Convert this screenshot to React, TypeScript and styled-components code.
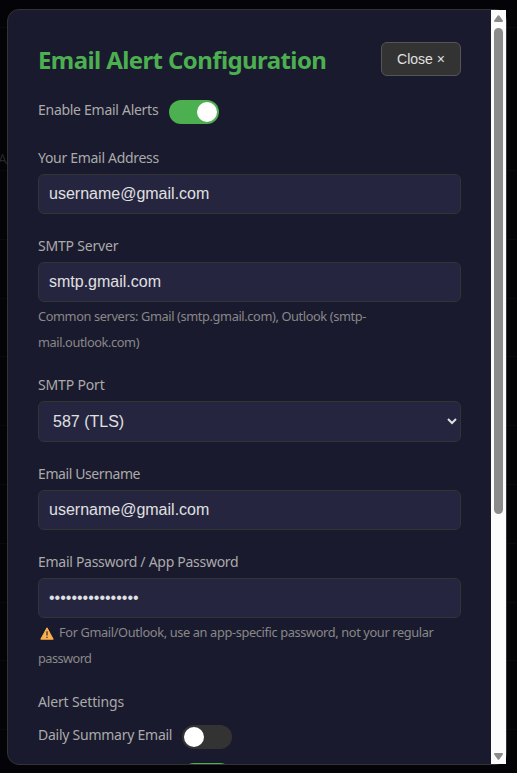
import React from "react";
import styled, { createGlobalStyle } from "styled-components";

const GlobalStyle = createGlobalStyle`
  *, *::before, *::after { box-sizing: border-box; }
  html, body { margin: 0; height: 100%; background: #030308; overflow: hidden; }
  #root { height: 100%; }
`;

const ui = `"Segoe UI", "Noto Sans", "Open Sans", sans-serif`;
const control = `Arial, "Liberation Sans", sans-serif`;

const Page = styled.div`
  position: relative;
  width: 517px;
  height: 773px;
  overflow: hidden;
  background: #030308;
  font-family: ${ui};
`;

const Backdrop = styled.div`
  position: absolute;
  inset: 0;
  display: flex;
  flex-direction: column;
`;

const BackdropRow = styled.div<{ $height: number }>`
  flex: none;
  height: ${(p) => p.$height}px;
  border-bottom: 1px solid #0a0a0d;
  display: flex;
  align-items: flex-end;
  color: #25252a;
  font-size: 14px;
  line-height: 22px;
`;

const BackdropText = styled.span`
  margin-left: -2px;
`;

const Dialog = styled.div`
  position: relative;
  display: flex;
  width: 500px;
  height: 756px;
  margin: 9px 0 0 7px;
  border: 1px solid #333;
  border-radius: 12px;
  background: #1a1a2e;
`;

const Content = styled.div`
  flex: 1;
  min-width: 0;
  padding: 30px 30px 0;
  overflow: hidden;
`;

const Scrollbar = styled.div`
  flex: none;
  display: flex;
  flex-direction: column;
  align-items: center;
  width: 15px;
  background: #fcfcfc;
`;

const ArrowIcon = styled.svg<{ $down?: boolean }>`
  flex: none;
  width: 15px;
  height: ${(p) => (p.$down ? 16 : 18)}px;
  fill: #8b8b8b;
`;

const Thumb = styled.div`
  width: 9px;
  height: 486px;
  border-radius: 5px;
  background: #8b8b8b;
`;

const Track = styled.div`
  flex: 1;
`;

const Header = styled.header`
  display: flex;
  justify-content: space-between;
  align-items: center;
  height: 38px;
  margin-bottom: 22px;
`;

const Title = styled.h2`
  margin: 0;
  padding-top: 2px;
  color: #4caf50;
  font-size: 24px;
  font-weight: 700;
  line-height: 38px;
  white-space: nowrap;
  letter-spacing: -0.6px;
`;

const CloseButton = styled.button`
  width: 80px;
  height: 34px;
  padding: 0;
  border: 1px solid #555;
  border-radius: 6px;
  background: #333;
  color: #e0e0e0;
  font: 14px ${control};
`;

const Label = styled.label<{ $track?: number }>`
  display: block;
  height: 24px;
  color: #aaa;
  font-size: 14px;
  line-height: 24px;
  white-space: nowrap;
  letter-spacing: ${(p) => p.$track ?? -0.28}px;
`;

const ToggleRow = styled.div<{ $labelWidth: number; $gap: number }>`
  display: grid;
  grid-template-columns: ${(p) => p.$labelWidth}px 50px;
  height: 24px;
  margin-bottom: ${(p) => p.$gap}px;

  ${Label} {
    margin-top: -2px;
  }
`;

const Toggle = styled.span<{ $on?: boolean }>`
  display: flex;
  justify-content: ${(p) => (p.$on ? "flex-end" : "flex-start")};
  width: 50px;
  height: 24px;
  padding: 2px;
  border-radius: 12px;
  background: ${(p) => (p.$on ? "#4caf50" : "#333")};

  &::after {
    content: "";
    width: 20px;
    height: 20px;
    border-radius: 50%;
    background: #fff;
  }
`;

const Field = styled.div<{ $gap?: number }>`
  display: flex;
  flex-direction: column;
  margin-bottom: ${(p) => p.$gap ?? 20}px;
`;

const Input = styled.input`
  width: 100%;
  height: 40px;
  margin: 4px 0 0;
  padding: 0 10px;
  border: 1px solid #333;
  border-radius: 6px;
  outline: none;
  background: #252540;
  color: #e0e0e0;
  font: 16px ${control};
`;

const Select = styled.select`
  width: 100%;
  height: 41px;
  margin: 4px 0 0;
  padding: 0 0 0 10px;
  border: 1px solid #333;
  border-radius: 6px;
  outline: none;
  background: #252540;
  color: #e0e0e0;
  font: 16px ${control};
`;

const Hint = styled.small`
  display: flex;
  flex-direction: column;
  padding-top: 1px;
  color: #888;
  font-size: 12.8px;
  line-height: 26px;
  white-space: nowrap;
`;

const HintLine = styled.span<{ $track?: number }>`
  display: flex;
  align-items: center;
  height: 26px;
  letter-spacing: ${(p) => p.$track ?? -0.39}px;
`;

const WarningIcon = styled.svg`
  width: 14px;
  height: 13px;
  margin: 2px 5px 0 2px;
`;

const backdropRows = [28, 143, 69, 59, 58, 69, 59, 59, 59, 58, 69];

export default function App() {
  return (
    <>
      <GlobalStyle />
      <Page>
        <Backdrop>
          {backdropRows.map((height, i) => (
            <BackdropRow key={i} $height={height}>
              {i === 1 && <BackdropText>A</BackdropText>}
            </BackdropRow>
          ))}
        </Backdrop>
        <Dialog role="dialog">
          <Content>
            <Header>
              <Title>Email Alert Configuration</Title>
              <CloseButton>Close ×</CloseButton>
            </Header>

            <ToggleRow $labelWidth={131} $gap={22}>
              <Label>Enable Email Alerts</Label>
              <Toggle $on />
            </ToggleRow>

            <Field>
              <Label $track={-0.3}>Your Email Address</Label>
              <Input defaultValue="username@gmail.com" />
            </Field>

            <Field $gap={18}>
              <Label $track={-0.2}>SMTP Server</Label>
              <Input defaultValue="smtp.gmail.com" />
              <Hint>
                <HintLine>Common servers: Gmail (smtp.gmail.com), Outlook (smtp-</HintLine>
                <HintLine $track={-0.42}>mail.outlook.com)</HintLine>
              </Hint>
            </Field>

            <Field>
              <Label $track={-0.17}>SMTP Port</Label>
              <Select defaultValue="587">
                <option value="587">587 (TLS)</option>
              </Select>
            </Field>

            <Field>
              <Label $track={-0.4}>Email Username</Label>
              <Input defaultValue="username@gmail.com" />
            </Field>

            <Field $gap={19}>
              <Label>Email Password / App Password</Label>
              <Input type="password" defaultValue="abcdefghijklmnop" />
              <Hint>
                <HintLine $track={-0.37}>
                  <WarningIcon viewBox="0 0 14 13">
                    <path d="M7 .8 13.2 12.2H.8Z" fill="#ffb04c" stroke="#ffb04c" strokeLinejoin="round" />
                    <path d="M7 4.2v4.2M7 9.7v1.4" stroke="#3b3440" strokeWidth="1.3" />
                  </WarningIcon>
                  For Gmail/Outlook, use an app-specific password, not your regular
                </HintLine>
                <HintLine $track={-0.58}>password</HintLine>
              </Hint>
            </Field>

            <Field $gap={11}>
              <Label $track={-0.16}>Alert Settings</Label>
            </Field>

            <ToggleRow $labelWidth={144} $gap={14}>
              <Label $track={-0.25}>Daily Summary Email</Label>
              <Toggle />
            </ToggleRow>
            <ToggleRow $labelWidth={144} $gap={14}>
              <span />
              <Toggle $on />
            </ToggleRow>
          </Content>
          <Scrollbar>
            <ArrowIcon viewBox="0 0 15 18">
              <path d="M6.8 5.6Q7.5 4.8 8.2 5.6L11.8 10.6Q12.2 12 11.2 12H3.8Q2.8 12 3.2 10.6Z" />
            </ArrowIcon>
            <Thumb />
            <Track />
            <ArrowIcon viewBox="0 0 15 16" $down>
              <path d="M6.8 11.4Q7.5 12.2 8.2 11.4L11.8 6.4Q12.2 5 11.2 5H3.8Q2.8 5 3.2 6.4Z" />
            </ArrowIcon>
          </Scrollbar>
        </Dialog>
      </Page>
    </>
  );
}
